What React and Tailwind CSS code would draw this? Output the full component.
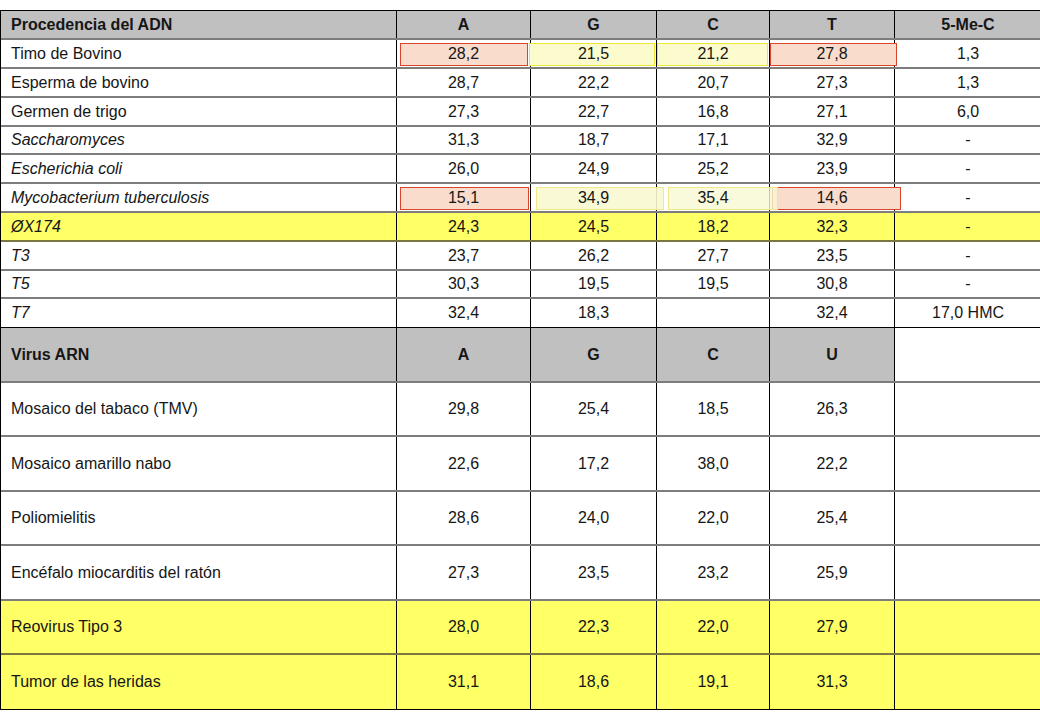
import React from 'react';

const COLS = 'grid grid-cols-[396px_134px_126px_113px_125px_146px]';

const dna = [
  { name: 'Timo de Bovino', v: ['28,2', '21,5', '21,2', '27,8', '1,3'], h: 29, mark: 'strong' },
  { name: 'Esperma de bovino', v: ['28,7', '22,2', '20,7', '27,3', '1,3'], h: 29 },
  { name: 'Germen de trigo', v: ['27,3', '22,7', '16,8', '27,1', '6,0'], h: 29 },
  { name: 'Saccharomyces', v: ['31,3', '18,7', '17,1', '32,9', '-'], h: 28, italic: true },
  { name: 'Escherichia coli', v: ['26,0', '24,9', '25,2', '23,9', '-'], h: 29, italic: true },
  { name: 'Mycobacterium tuberculosis', v: ['15,1', '34,9', '35,4', '14,6', '-'], h: 29, italic: true, mark: 'soft' },
  { name: 'ØX174', v: ['24,3', '24,5', '18,2', '32,3', '-'], h: 29, italic: true, yellow: true },
  { name: 'T3', v: ['23,7', '26,2', '27,7', '23,5', '-'], h: 29, italic: true },
  { name: 'T5', v: ['30,3', '19,5', '19,5', '30,8', '-'], h: 28, italic: true },
  { name: 'T7', v: ['32,4', '18,3', '', '32,4', '17,0 HMC'], h: 29, italic: true, last: true },
];

const rna = [
  { name: 'Mosaico del tabaco (TMV)', v: ['29,8', '25,4', '18,5', '26,3', ''], h: 54 },
  { name: 'Mosaico amarillo nabo', v: ['22,6', '17,2', '38,0', '22,2', ''], h: 55 },
  { name: 'Poliomielitis', v: ['28,6', '24,0', '22,0', '25,4', ''], h: 54 },
  { name: 'Encéfalo miocarditis del ratón', v: ['27,3', '23,5', '23,2', '25,9', ''], h: 55 },
  { name: 'Reovirus Tipo 3', v: ['28,0', '22,3', '22,0', '27,9', ''], h: 54, yellow: true },
  { name: 'Tumor de las heridas', v: ['31,1', '18,6', '19,1', '31,3', ''], h: 55, yellow: true, last: true },
];

// overlay boxes for the highlighted rows, one class per column
const strongBoxes = [
  'left-[3px] right-[2px] bg-[#f9dccb] border-[#d8452c] z-10',
  'left-[-2px] right-[1px] bg-[#fbfbcd] border-[#f0e634] z-10',
  'left-0 right-[1px] bg-[#fbfbcd] border-[#f0e634] z-10',
  'left-0 right-[-3px] bg-[#f9dccb] border-[#d8452c] z-10',
];
const softBoxes = [
  'left-[3px] right-[1px] bg-[#f9dccb] border-[#d8452c] z-10',
  'left-[5px] right-[-8px] bg-[#f8f8d2]/90 border-[#efe98a] z-20',
  'left-[11px] right-[-9px] bg-[#f8f8d2]/80 border-[#efe98a] z-20',
  'left-[2px] right-[-7px] bg-[#f9dccb] border-[#d8452c] z-10',
];

function Row({ row, header }) {
  const bg = header ? 'bg-[#c0c0c0]' : row.yellow ? 'bg-[#ffff66]' : 'bg-white';
  const line = row.last ? 'border-b border-black' : row.yellow ? 'border-b-2 border-[#7a7740]' : 'border-b-2 border-[#7d7d7d]';
  const boxes = row.mark === 'strong' ? strongBoxes : row.mark === 'soft' ? softBoxes : null;
  return (
    <div className={`${COLS} ${line}`} style={{ height: row.h }}>
      <div
        className={`${bg} border-r border-black flex items-center pl-[10px] ${header ? 'font-bold' : ''} ${row.italic ? 'italic' : ''}`}
      >
        {row.name}
      </div>
      {row.v.map((val, i) => (
        <div
          key={i}
          className={`relative flex items-center justify-center ${i < 4 ? 'border-r border-black' : ''} ${
            header && row.blankLast && i === 4 ? 'bg-white' : bg
          } ${header ? 'font-bold' : ''}`}
        >
          {boxes && i < 4 && (
            <div className={`absolute top-[3px] bottom-[1px] border ${boxes[i]}`} />
          )}
          <span className="relative z-30">{val}</span>
        </div>
      ))}
    </div>
  );
}

export default function App() {
  return (
    <div className="w-[1040px] h-[720px] bg-white pt-[10px] text-[16px] text-[#161616] font-['Liberation_Sans',Arial,sans-serif]">
      <div className="border-t border-l border-black">
        <Row header row={{ name: 'Procedencia del ADN', v: ['A', 'G', 'C', 'T', '5-Me-C'], h: 29 }} />
        {dna.map((r) => (
          <Row key={r.name} row={r} />
        ))}
        <Row header row={{ name: 'Virus ARN', v: ['A', 'G', 'C', 'U', ''], h: 55, blankLast: true }} />
        {rna.map((r) => (
          <Row key={r.name} row={r} />
        ))}
      </div>
    </div>
  );
}
